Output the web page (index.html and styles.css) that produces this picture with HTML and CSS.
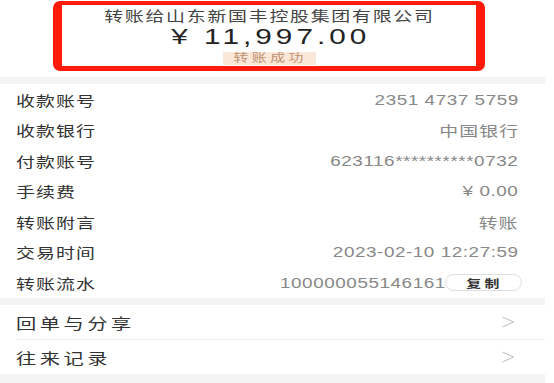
FILE: index.html
```html
<!DOCTYPE html>
<html lang="zh-CN">
<head>
    <meta charset="UTF-8">
    <meta name="viewport" content="width=device-width, initial-scale=1.0">
    <title>转账详情</title>
    <link rel="stylesheet" href="styles.css">
</head>
<body>
<div class="page">

    <!-- Header -->
    <div class="header">
        <div class="highlight">
            <div class="payee">转账给山东新国丰控股集团有限公司</div>
            <div class="amount">¥ 11,997.00</div>
            <div class="status"><span class="status-text">转账成功</span></div>
        </div>
    </div>

    <div class="gap"></div>

    <!-- Details -->
    <div class="details">
        <div class="row"><span class="label">收款账号</span><span class="value num">2351 4737 5759</span></div>
        <div class="row"><span class="label">收款银行</span><span class="value cn">中国银行</span></div>
        <div class="row"><span class="label">付款账号</span><span class="value num">623116**********0732</span></div>
        <div class="row"><span class="label">手续费</span><span class="value num">¥ 0.00</span></div>
        <div class="row"><span class="label">转账附言</span><span class="value cn">转账</span></div>
        <div class="row"><span class="label">交易时间</span><span class="value num">2023-02-10 12:27:59</span></div>
        <div class="row">
            <span class="label">转账流水</span>
            <span class="serial">
                <span class="value num">100000055146161</span>
                <button class="copy-btn"><span class="copy-text">复制</span></button>
            </span>
        </div>
    </div>

    <div class="gap"></div>

    <!-- Links -->
    <div class="links">
        <div class="link">
            <span class="link-text">回单与分享</span>
            <svg class="arrow" width="12" height="12" viewBox="0 0 12 12"><polyline points="0.5,1 11.5,6 0.5,11" fill="none" stroke="#bbb" stroke-width="1"/></svg>
        </div>
        <div class="link">
            <span class="link-text">往来记录</span>
            <svg class="arrow" width="12" height="12" viewBox="0 0 12 12"><polyline points="0.5,1 11.5,6 0.5,11" fill="none" stroke="#bbb" stroke-width="1"/></svg>
        </div>
    </div>

    <div class="gap bottom"></div>
</div>
</body>
</html>
```

FILE: styles.css
```css
body {
    margin: 0;
    background: #fff;
    font-family: "Liberation Sans", "Noto Sans CJK SC", sans-serif;
    color: #333;
}
.page {
    width: 545px;
}

/* the capture is wide, so text is drawn stretched */
.payee, .amount, .status-text, .label, .value, .copy-text, .link-text {
    display: inline-block;
    transform: scaleX(1.35);
}

.header {
    height: 77px;
    padding-top: 1px;
    box-sizing: border-box;
}
.highlight {
    margin-left: 53px;
    width: 432px;
    height: 70px;
    box-sizing: border-box;
    border: 9px solid #ff1a0a;
    border-top-width: 4px;
    border-bottom-width: 5px;
    border-radius: 7px;
    display: flex;
    flex-direction: column;
    align-items: center;
    padding-top: 1px;
}
.payee {
    font-size: 14px;
    line-height: 20px;
    letter-spacing: 1.3px;
    margin-right: -1.3px;
    color: #444;
}
.amount {
    font-size: 22px;
    line-height: 22px;
    letter-spacing: 3px;
    margin-right: -3px;
    color: #222;
}
.status {
    margin-top: 4px;
    width: 93px;
    height: 13px;
    line-height: 13px;
    text-align: center;
    font-size: 11px;
    background: #fbe7d8;
    color: #bf9272;
}
.status-text {
    letter-spacing: 2.6px;
    margin-right: -2.6px;
}
.gap {
    height: 7px;
    background: #f3f3f3;
}
.gap.bottom {
    height: 12px;
}
.details {
    padding: 0.5px 27px 0 16px;
}
.row {
    height: 30.5px;
    display: flex;
    align-items: center;
    justify-content: space-between;
}
.label {
    font-size: 14px;
    letter-spacing: 0.8px;
    transform-origin: left center;
    color: #333;
}
.value {
    font-size: 14px;
    color: #888;
    transform-origin: right center;
}
.value.num {
    letter-spacing: 0.4px;
    margin-right: -0.4px;
}
.value.cn {
    letter-spacing: 0.8px;
    margin-right: -0.8px;
}
.serial {
    display: flex;
    align-items: center;
}
.copy-btn {
    margin-right: -4px;
    width: 77px;
    height: 17px;
    padding: 0;
    border: 1px solid #ddd;
    border-radius: 9px;
    background: #fff;
    font-family: inherit;
    font-size: 11px;
    font-weight: bold;
    color: #333;
}
.copy-text {
    letter-spacing: 2.4px;
    margin-right: -2.4px;
}
.links {
    padding-left: 16px;
}
.link {
    height: 34px;
    padding-right: 31px;
    display: flex;
    align-items: center;
    justify-content: space-between;
    font-size: 15px;
    color: #333;
}
.link-text {
    letter-spacing: 2.6px;
    transform-origin: left center;
}
.link + .link {
    border-top: 1px solid #eee;
}
```
